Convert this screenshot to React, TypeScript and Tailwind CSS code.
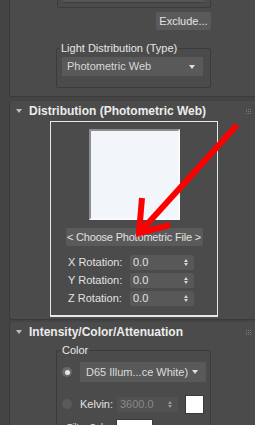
import React from 'react';

const font = { fontFamily: '"Liberation Sans", Arial, sans-serif' };

function Triangle() {
    return <span className="inline-block w-0 h-0 border-l-[3px] border-r-[3px] border-t-[4px] border-l-transparent border-r-transparent border-t-[#e0e0e0]" />;
}

function SpinArrows({ dim }: { dim?: boolean }) {
    const c = dim ? 'border-b-[#9a9a9a]' : 'border-b-[#d8d8d8]';
    const c2 = dim ? 'border-t-[#9a9a9a]' : 'border-t-[#d8d8d8]';
    return (
        <span className="flex flex-col gap-[1px] items-center">
            <span className={`w-0 h-0 border-l-[2.5px] border-r-[2.5px] border-b-[3px] border-l-transparent border-r-transparent ${c}`} />
            <span className={`w-0 h-0 border-l-[2.5px] border-r-[2.5px] border-t-[3px] border-l-transparent border-r-transparent ${c2}`} />
        </span>
    );
}

function Grip() {
    return (
        <div className="grid grid-cols-3 gap-[1px]">
            {Array.from({ length: 9 }, (_, i) => <span key={i} className="w-[1px] h-[1px] bg-[#7a7a7a]" />)}
        </div>
    );
}

function RolloutHeader({ title }: { title: string }) {
    return (
        <div className="flex items-center h-[20px] pl-[6px] pr-[4px]">
            <span className="w-0 h-0 border-l-[3px] border-r-[3px] border-t-[4px] border-l-transparent border-r-transparent border-t-[#bdbdbd]" />
            <span className="ml-[7px] text-[12px] font-bold text-[#ececec] whitespace-nowrap">{title}</span>
            <div className="ml-auto"><Grip /></div>
        </div>
    );
}

function RotRow({ axis }: { axis: string }) {
    return (
        <div className="flex items-center h-[15px]">
            <span className="w-[62px] text-[11px] text-[#e2e2e2] whitespace-nowrap">{axis} Rotation:</span>
            <div className="flex items-center justify-between w-[64px] h-[15px] bg-[#585858] rounded-[2px] pl-[3px] pr-[6px]">
                <span className="text-[11px] text-[#e2e2e2]">0.0</span>
                <SpinArrows />
            </div>
        </div>
    );
}

export default function App() {
    return (
        <div className="relative w-[255px] h-[425px] overflow-hidden bg-[#444444] text-[#e2e2e2]" style={font}>
            <div className="flex flex-col pl-[9px]">
                {/* first rollout, cut off at the top */}
                <div className="h-[97px] bg-[#4b4b4b] border-l border-b border-[#3a3a3a] rounded-bl-[3px]">
                    <div className="ml-[47px] w-[154px] h-[8px] border-x border-b border-[#3b3b3b] rounded-b-[2px] px-[5px]">
                        <div className="h-[3px] bg-[#555555] border-b border-[#3f3f3f]" />
                    </div>
                    <div className="flex justify-end pr-[44px] mt-[4px]">
                        <div className="w-[55px] h-[18px] bg-[#5a5a5a] rounded-[2px] flex items-center justify-center text-[11px] text-[#e4e4e4]">Exclude...</div>
                    </div>
                    <div className="relative ml-[46px] mt-[18px] w-[155px] h-[40px] border border-[#3b3b3b] rounded-[2px] pt-[8px] pl-[5px]">
                        <span className="absolute -top-[8px] left-[3px] px-[1px] bg-[#4b4b4b] text-[11px] leading-[14px] text-[#e8e8e8] whitespace-nowrap">Light Distribution (Type)</span>
                        <div className="flex items-center justify-between w-[141px] h-[19px] bg-[#595959] pl-[5px] pr-[8px]">
                            <span className="text-[11px] text-[#d8d8d8]">Photometric Web</span>
                            <Triangle />
                        </div>
                    </div>
                </div>

                {/* Distribution rollout */}
                <div className="mt-[4px] h-[219px] bg-[#4b4b4b] border-l border-b border-[#3a3a3a] rounded-l-[3px]">
                    <RolloutHeader title="Distribution (Photometric Web)" />
                    <div className="ml-[40px] w-[168px] h-[196px] border border-b-2 border-[#e8e8e8] flex flex-col items-center">
                        <div className="mt-[7px] w-[91px] h-[91px] border-2 border-t-[#8e8e8e] border-l-[#8e8e8e] border-r-[#fafafa] border-b-[#fafafa] bg-[#f2f5fa]" />
                        <div className="mt-[8px] w-[137px] h-[18px] bg-[#5a5a5a] rounded-[2px] flex items-center justify-center text-[11px] tracking-[-0.2px] whitespace-nowrap text-[#e0e0e0]">&lt; Choose Photometric File &gt;</div>
                        <div className="mt-[9px] flex flex-col gap-[3px] self-start ml-[17px]">
                            <RotRow axis="X" />
                            <RotRow axis="Y" />
                            <RotRow axis="Z" />
                        </div>
                    </div>
                </div>

                {/* Intensity rollout */}
                <div className="mt-[2px] h-[110px] bg-[#4b4b4b] border-l border-[#3a3a3a] rounded-tl-[3px]">
                    <RolloutHeader title="Intensity/Color/Attenuation" />
                    <div className="relative ml-[46px] mt-[8px] w-[155px] h-[90px] border border-[#3b3b3b] rounded-[2px] pt-[11px] pl-[5px]">
                        <span className="absolute -top-[8px] left-[4px] px-[1px] bg-[#4b4b4b] text-[11px] leading-[14px] text-[#e8e8e8]">Color</span>
                        <div className="flex items-center h-[20px]">
                            <span className="w-[10px] h-[10px] rounded-full bg-[#6a6a6a] flex items-center justify-center">
                                <span className="w-[5px] h-[5px] rounded-full bg-[#e6e6e6]" />
                            </span>
                            <div className="ml-[8px] flex items-center justify-between w-[126px] h-[20px] bg-[#595959] pl-[6px] pr-[8px]">
                                <span className="text-[11px] text-[#dcdcdc] whitespace-nowrap">D65 Illum...ce White)</span>
                                <Triangle />
                            </div>
                        </div>
                        <div className="flex items-center h-[20px] mt-[12px]">
                            <span className="w-[10px] h-[10px] rounded-full bg-[#5a5a5a]" />
                            <span className="ml-[8px] w-[37px] text-[11px] text-[#e2e2e2]">Kelvin:</span>
                            <div className="flex items-center justify-between w-[61px] h-[15px] bg-[#515151] pl-[3px] pr-[6px]">
                                <span className="text-[11px] text-[#8a8a8a]">3600.0</span>
                                <SpinArrows dim />
                            </div>
                            <span className="ml-[7px] w-[19px] h-[19px] bg-white border border-[#3a3a3a]" />
                        </div>
                        <div className="flex items-start h-[20px] mt-[5px]">
                            <span className="ml-[5px] w-[49px] text-[9px] leading-[11px] mt-[3px] text-[#e2e2e2] whitespace-nowrap">Filter Color:</span>
                            <span className="w-[37px] h-[19px] bg-white border border-[#3a3a3a]" />
                        </div>
                    </div>
                </div>
            </div>

            {/* red annotation arrow */}
            <svg className="absolute inset-0 pointer-events-none" width="255" height="425" viewBox="0 0 255 425">
                <g stroke="#ff0000" strokeWidth="6" fill="none" strokeLinecap="butt" strokeLinejoin="miter">
                    <line x1="237" y1="125" x2="141" y2="231" />
                    <polyline points="142,198 139,233 170,225" />
                </g>
            </svg>
        </div>
    );
}
